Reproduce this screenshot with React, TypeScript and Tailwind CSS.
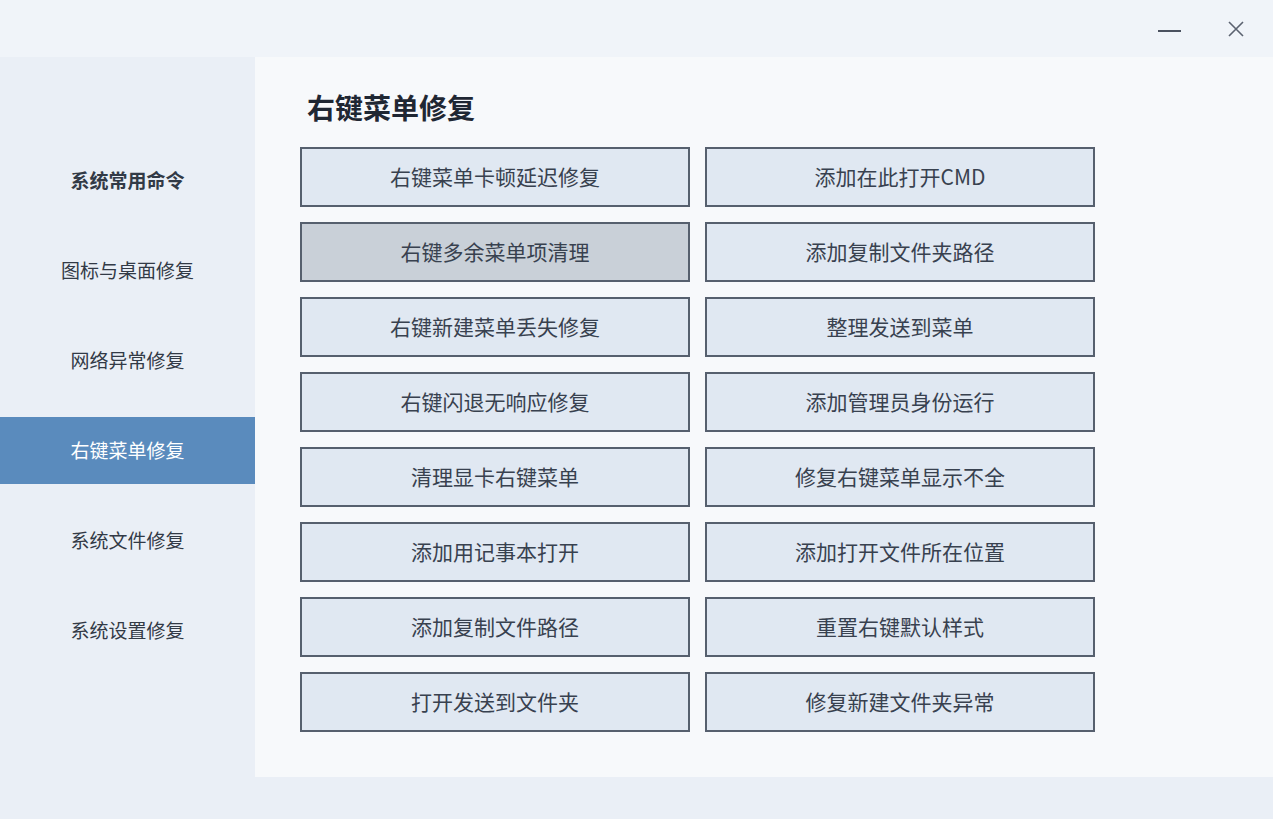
import { useState } from 'react';

const navItems = ['系统常用命令', '图标与桌面修复', '网络异常修复', '右键菜单修复', '系统文件修复', '系统设置修复'];

const actions = [
  '右键菜单卡顿延迟修复',
  '添加在此打开CMD',
  '右键多余菜单项清理',
  '添加复制文件夹路径',
  '右键新建菜单丢失修复',
  '整理发送到菜单',
  '右键闪退无响应修复',
  '添加管理员身份运行',
  '清理显卡右键菜单',
  '修复右键菜单显示不全',
  '添加用记事本打开',
  '添加打开文件所在位置',
  '添加复制文件路径',
  '重置右键默认样式',
  '打开发送到文件夹',
  '修复新建文件夹异常',
];

export default function App() {
  const [active, setActive] = useState(3);
  const [hovered, setHovered] = useState<number | null>(2);

  return (
    <div
      className="w-[1273px] h-[819px] bg-[#eaeff6] flex flex-col overflow-hidden"
      style={{ fontFamily: '"Noto Sans CJK SC", "Noto Sans", sans-serif' }}
    >
      {/* title bar */}
      <div className="h-[57px] bg-[#f0f4f9] flex items-center justify-end pr-[17px] gap-[27px]">
        <button className="w-[40px] h-[40px] flex items-center justify-center pt-[4px]">
          <span className="block w-[23px] h-[2px] bg-[#4b5260]" />
        </button>
        <button className="w-[40px] h-[40px] flex items-center justify-center text-[#5b6270]">
          <svg width="16" height="16" viewBox="0 0 16 16" fill="none" stroke="currentColor" strokeWidth="1.6">
            <path d="M1 1L15 15M15 1L1 15" />
          </svg>
        </button>
      </div>

      <div className="flex h-[720px]">
        {/* sidebar */}
        <div className="w-[255px] flex flex-col pt-[90px] gap-[23px]">
          {navItems.map((item, i) => (
            <button
              key={item}
              onClick={() => setActive(i)}
              className={`h-[67px] flex items-center justify-center text-[19px] ${
                active === i ? 'bg-[#5a8bbd] text-white' : 'text-[#323a46]'
              } ${i === 0 ? 'font-bold' : ''}`}
            >
              {item}
            </button>
          ))}
        </div>

        {/* content */}
        <div className="flex-1 bg-[#f7f9fb] pl-[45px] pt-[32px]">
          <h1 className="pl-[7px] text-[28px] leading-[36px] font-bold text-[#1f2733] mb-[22px]">
            右键菜单修复
          </h1>
          <div className="grid grid-cols-[390px_390px] gap-x-[15px] gap-y-[15px]">
            {actions.map((label, i) => (
              <button
                key={label}
                onMouseEnter={() => setHovered(i)}
                onMouseLeave={() => setHovered(null)}
                className={`h-[60px] border-2 border-[#56606e] flex items-center justify-center text-[21px] text-[#38414f] ${
                  hovered === i ? 'bg-[#c9d0d8]' : 'bg-[#e0e8f2]'
                }`}
              >
                {label}
              </button>
            ))}
          </div>
        </div>
      </div>
    </div>
  );
}
